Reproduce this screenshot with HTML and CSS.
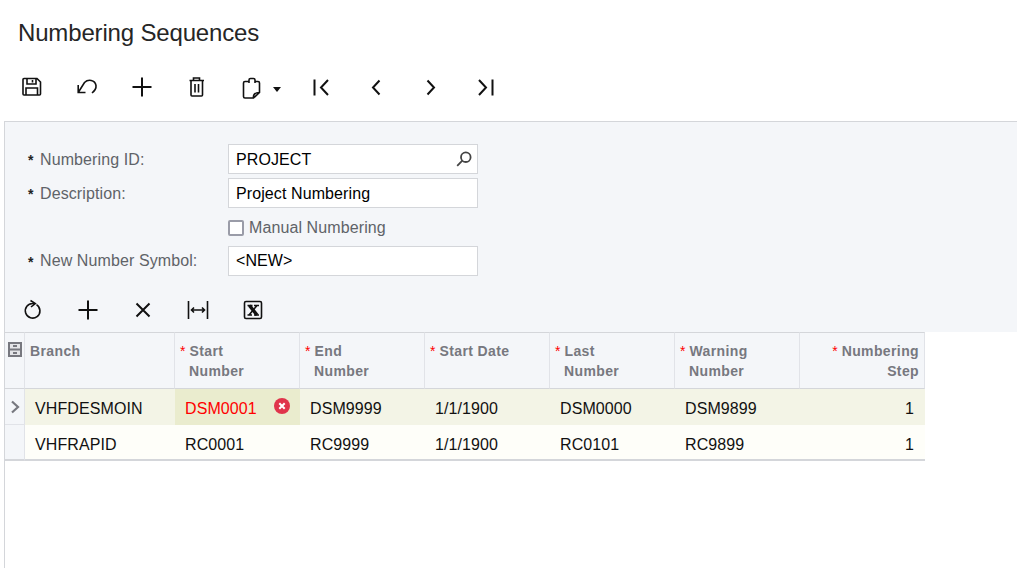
FILE: index.html
```html
<!DOCTYPE html>
<html lang="en">
<head>
<meta charset="utf-8">
<title>Numbering Sequences</title>
<link rel="stylesheet" href="styles.css">
</head>
<body>
<div class="page">
  <h1 class="title">Numbering Sequences</h1>
  <div class="toolbar main-bar">
    <button class="tool"><svg viewBox="0 0 20 20"><path d="M1 2.500a1 1 0 0 1 1-1h13l3.500 3.500v12a1 1 0 0 1-1 1H2a1 1 0 0 1-1-1zM5 1.500v5.500h9V1.500M10.500 3v2.500M4 18v-7h11.500v7"/></svg></button>
    <button class="tool"><svg viewBox="0 0 20 20"><path d="M1.200 8v7.500H8.500M1.200 15.500L7.500 5.500C11 2 18 2.500 19 8.500c.3 2.500-1.500 5.500-4 7.500"/></svg></button>
    <button class="tool"><svg viewBox="0 0 20 20"><path class="thick" d="M10 .5v19M.5 10h19"/></svg></button>
    <button class="tool"><svg viewBox="0 0 20 20"><path d="M2.500 3.500H17M6.500 3.500V1h6v2.500M4 3.500V18a1 1 0 0 0 1 1h9.500a1 1 0 0 0 1-1V3.500M8 7v8.500M11.500 7v8.500"/></svg></button>
    <button class="tool split"><svg viewBox="0 0 20 20"><path d="M7 4.500H3A1.500 1.500 0 0 0 1.500 6v13.500A1.500 1.500 0 0 0 3 21h8.500l6-5.500V6A1.500 1.500 0 0 0 16 4.500h-3M7 6V3a1.500 1.500 0 0 1 1.500-1.500h3A1.500 1.500 0 0 1 13 3v3M11.500 21c-.5-3 1-5.500 6-5.500"/></svg><span class="caret"></span></button>
    <button class="tool"><svg viewBox="0 0 20 20"><path class="thick" d="M3.500 2.500v16M17 3l-7 7.500 7 7.500"/></svg></button>
    <button class="tool"><svg viewBox="0 0 20 20"><path class="thick" d="M13.500 3.500l-6.500 7 6.500 7"/></svg></button>
    <button class="tool"><svg viewBox="0 0 20 20"><path class="thick" d="M6.500 3.500l6.500 7-6.500 7"/></svg></button>
    <button class="tool"><svg viewBox="0 0 20 20"><path class="thick" d="M16.500 2.500v16M3 3l7 7.500L3 18"/></svg></button>
  </div>

  <main class="panel">
    <form class="form">
      <div class="row nudge">
        <label class="label"><span class="req">*</span>Numbering ID:</label>
        <div class="field"><span>PROJECT</span>
          <svg class="search" viewBox="0 0 16 16"><circle cx="9.800" cy="6.200" r="4.800"/><path d="M6.300 9.700L1.200 14.800"/></svg>
        </div>
      </div>
      <div class="row nudge">
        <label class="label"><span class="req">*</span>Description:</label>
        <div class="field"><span>Project Numbering</span></div>
      </div>
      <div class="row check-row">
        <span class="box"></span><span class="check-text">Manual Numbering</span>
      </div>
      <div class="row">
        <label class="label"><span class="req">*</span>New Number Symbol:</label>
        <div class="field"><span>&lt;NEW&gt;</span></div>
      </div>
    </form>

    <div class="toolbar grid-bar">
      <button class="tool"><svg viewBox="0 0 20 20"><path d="M13.500 4.600A7.300 7.300 0 1 1 10 3.500h2M7.500 .5l4.800 3-4.300 3.500"/></svg></button>
      <button class="tool"><svg viewBox="0 0 20 20"><path class="thick" d="M10 .5v19M.5 10h19"/></svg></button>
      <button class="tool"><svg viewBox="0 0 20 20"><path class="thick" d="M3.500 3.500l13 13M16.500 3.500l-13 13"/></svg></button>
      <button class="tool"><svg viewBox="0 0 20 20"><path d="M.5 1v18M19.500 1v18M3.500 10h13M6 7.500L3.500 10 6 12.500M14 7.500l2.500 2.500-2.500 2.500"/></svg></button>
      <button class="tool"><svg viewBox="0 0 20 20"><rect x="1.500" y="1.500" width="17" height="17" rx="1.500"/><path class="x-mark" d="M6.500 5.500l7.500 9.500"/><path d="M14 5.500l-8 9.500M4.500 5.500h5M11 5.500h5M4.500 15h4.500M11 15h5"/></svg></button>
    </div>

    <div class="grid">
      <div class="hd sel"><svg class="files" viewBox="0 0 14 15"><path d="M1 1h12v13H1zM1 7.500h12M5 4h4M5 11h4"/></svg></div>
      <div class="hd">Branch</div>
      <div class="hd"><span class="star">*</span>Start<br><span class="indent">Number</span></div>
      <div class="hd"><span class="star">*</span>End<br><span class="indent">Number</span></div>
      <div class="hd"><span class="star">*</span>Start Date</div>
      <div class="hd"><span class="star">*</span>Last<br><span class="indent">Number</span></div>
      <div class="hd"><span class="star">*</span>Warning<br><span class="indent">Number</span></div>
      <div class="hd right"><span class="star">*</span>Numbering<br>Step</div>

      <div class="sel body sel-active"><svg class="chev" viewBox="0 0 10 14"><path d="M2 1.500L8 7l-6 5.500"/></svg></div>
      <div class="cell active branch">VHFDESMOIN</div>
      <div class="cell active error">DSM0001<svg class="err" viewBox="0 0 16 16"><circle cx="8" cy="8" r="8"/><path d="M5.300 5.300l5.400 5.400M10.700 5.300l-5.400 5.400"/></svg></div>
      <div class="cell active">DSM9999</div>
      <div class="cell active">1/1/1900</div>
      <div class="cell active">DSM0000</div>
      <div class="cell active">DSM9899</div>
      <div class="cell active num">1</div>

      <div class="sel body last"></div>
      <div class="cell last branch">VHFRAPID</div>
      <div class="cell last">RC0001</div>
      <div class="cell last">RC9999</div>
      <div class="cell last">1/1/1900</div>
      <div class="cell last">RC0101</div>
      <div class="cell last">RC9899</div>
      <div class="cell last num">1</div>
    </div>
  </main>
</div>
</body>
</html>
```
FILE: styles.css
```css
* { box-sizing: border-box; }
html, body { margin: 0; padding: 0; background: #fff; }
body { font-family: "Liberation Sans", Arial, sans-serif; font-size: 16px; color: #000; letter-spacing: 0.1px; }
.page { width: 1017px; height: 568px; overflow: hidden; display: flex; flex-direction: column; }
.title { margin: 0; padding: 18px 0 0 18px; height: 60px; font-size: 24px; line-height: 30px; font-weight: 400; color: #262626; letter-spacing: -0.16px; }

.toolbar { display: flex; align-items: center; }
.main-bar { height: 61px; padding-left: 4.5px; padding-bottom: 7px; }
.tool { width: 55px; height: 30px; padding: 0 0 0 17.5px; border: 0; background: none; display: flex; align-items: center; position: relative; flex: none; }
.tool.split { width: 69px; }
.tool svg { width: 20px; height: 20px; fill: none; stroke: #111; stroke-width: 1.600; overflow: visible; flex: none; }
.tool svg .thick { stroke-width: 2; }
.tool svg .x-mark { stroke-width: 3.500; }
.caret { position: absolute; left: 48px; top: 15px; width: 0; height: 0; border-left: 4.500px solid transparent; border-right: 4.500px solid transparent; border-top: 5px solid #111; }

.panel { flex: 1; margin-left: 4px; border-left: 1px solid #d4d6da; display: flex; flex-direction: column; }
.form { background: #f4f6f9; border-top: 1px solid #d4d6da; padding: 22px 0 0 23px; height: 171px; }
.row { display: flex; align-items: center; height: 30px; margin-bottom: 4px; }
.check-row { padding: 1px 0 0 200px; }
.label { width: 200px; color: #5f6368; display: flex; }
.nudge .label { padding-top: 2px; }
.nudge .field { padding-top: 2px; }
.req { width: 12px; color: #222; font-size: 14px; font-weight: 700; padding-top: 3px; line-height: 15px; }
.nudge .req { padding-top: 2px; }
.field { width: 250px; height: 30px; border: 1px solid #d4d6da; background: #fff; padding: 0 7px; display: flex; align-items: center; justify-content: space-between; line-height: 24px; }
.search { width: 16px; height: 16px; margin: -2px -2px 0 0; fill: none; stroke: #444; stroke-width: 1.800; }
.box { width: 16px; height: 16px; border: 2px solid #9a9ca8; border-radius: 2px; background: #fff; margin-right: 5px; }
.check-text { color: #5f6368; }

.grid-bar { background: #f4f6f9; height: 40px; padding: 0 0 4px 0.5px; }

.grid { display: grid; grid-template-columns: 20px 150px repeat(6, 125px); grid-template-rows: 57px 36px 36px; width: 920px; }
.hd { background: #f4f6f9; border-top: 1px solid #d4d6da; border-bottom: 1px solid #d4d6da; border-right: 1px solid #e1e3e8; padding: 8px 5px 0; font-size: 14px; font-weight: 700; line-height: 20px; letter-spacing: 0.38px; color: #77787f; }
.hd.sel { padding: 9px 0 0 3px; }
.hd.right { text-align: right; }
.star { color: #f00; font-weight: 400; display: inline-block; width: 9.500px; line-height: 14px; letter-spacing: 0; text-align: left; }
.indent { padding-left: 9px; }
.files { width: 14px; height: 15px; fill: #e4e5e8; stroke: #77787f; stroke-width: 2; display: block; }
.sel.body { background: #f4f6f9; border-right: 1px solid #e1e3e8; display: flex; align-items: center; padding-left: 5px; }
.sel.body.sel-active { border-bottom: 1px solid #e1e3e8; }
.chev { width: 10px; height: 14px; fill: none; stroke: #77787f; stroke-width: 2.200; }
.cell { padding: 4px 10px 0; display: flex; align-items: center; line-height: 28px; color: #111; background: #fefef9; }
.cell.active { background: #f3f4e6; }
.cell.error { background: #eaecce; color: #f00; justify-content: space-between; }
.cell.num { justify-content: flex-end; padding-right: 11px; }
.cell.last { padding-top: 6px; }
.cell.last, .sel.body.last { border-bottom: 2px solid #d4d6da; }
.err { width: 16px; height: 16px; flex: none; margin-bottom: 6px; }
.err circle { fill: #e0344b; }
.err path { stroke: #fff; stroke-width: 2; fill: none; }
```
